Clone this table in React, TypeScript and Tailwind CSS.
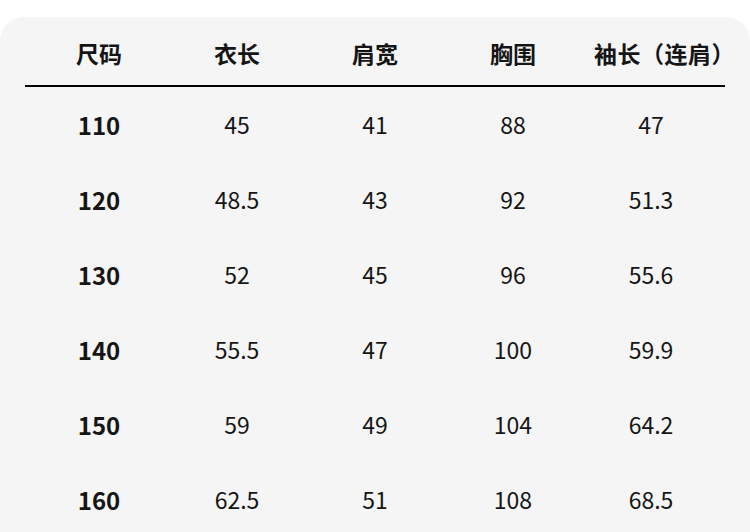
const headers = ["尺码", "衣长", "肩宽", "胸围", "袖长（连肩）"];

const rows = [
  ["110", "45", "41", "88", "47"],
  ["120", "48.5", "43", "92", "51.3"],
  ["130", "52", "45", "96", "55.6"],
  ["140", "55.5", "47", "100", "59.9"],
  ["150", "59", "49", "104", "64.2"],
  ["160", "62.5", "51", "108", "68.5"],
];

export default function App() {
  return (
    <div
      className="w-[750px] h-[532px] bg-white pt-[17px] overflow-hidden text-[#151515]"
      style={{ fontFamily: '"Noto Sans CJK SC", "Noto Sans", sans-serif' }}
    >
      <div className="h-[515px] bg-[#f5f5f5] rounded-t-[24px] px-[25px] overflow-hidden">
        {/* header */}
        <div className="grid grid-cols-[repeat(5,138px)] justify-center items-center h-[70px] pt-[4px] border-b-2 border-black">
          {headers.map((h, i) => (
            <div
              key={h}
              className={`text-center text-[23px] font-bold leading-none whitespace-nowrap ${
                i === 4 ? "pl-[12px] tracking-[0.5px]" : ""
              }`}
            >
              {h}
            </div>
          ))}
        </div>

        {/* size rows */}
        <div>
          {rows.map((r) => (
            <div
              key={r[0]}
              className="grid grid-cols-[repeat(5,138px)] justify-center items-center h-[75px]"
            >
              {r.map((v, i) => (
                <div
                  key={i}
                  className={
                    i === 0
                      ? "text-center text-[24px] font-bold leading-none"
                      : "text-center text-[23px] font-normal leading-none"
                  }
                >
                  {v}
                </div>
              ))}
            </div>
          ))}
        </div>
      </div>
    </div>
  );
}
